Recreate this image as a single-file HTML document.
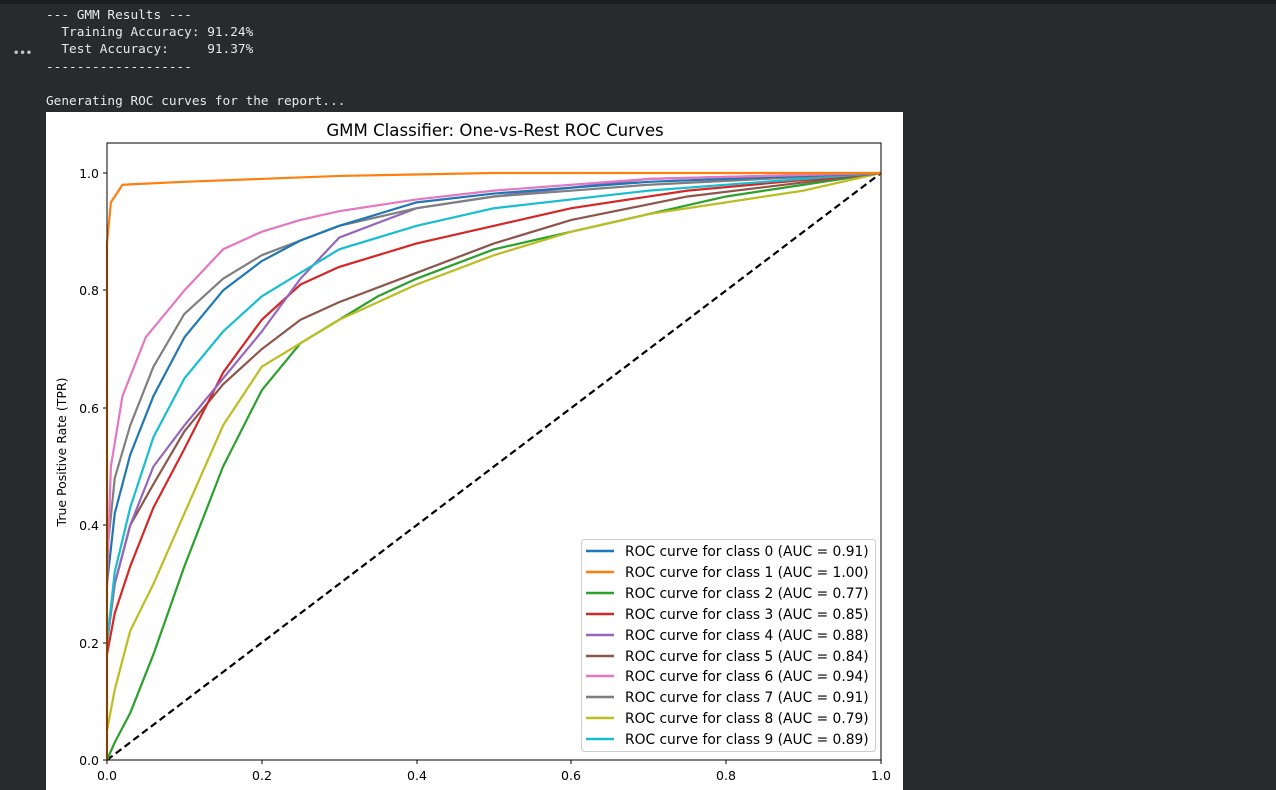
<!DOCTYPE html>
<html><head><meta charset="utf-8"><style>
html,body{margin:0;padding:0}
body{width:1276px;height:790px;background:#282a2c;position:relative;overflow:hidden;font-family:"Liberation Mono",monospace}
.top{position:absolute;left:0;top:0;width:1276px;height:4px;background:#1c1d1f}
.out{position:absolute;left:46px;top:7px;color:#e8eaed;font-size:12.75px;line-height:17.2px;white-space:pre;font-family:"DejaVu Sans Mono","Liberation Mono",monospace}
.dots{position:absolute;left:13px;top:48px;color:#c4c7c5;font-size:10px;font-weight:bold;font-family:"DejaVu Sans",sans-serif}
.plot{position:absolute;left:46px;top:112px;width:857px;height:678px;background:#fff}
svg text{font-family:"DejaVu Sans","Liberation Sans",sans-serif;fill:#000}
</style></head><body>
<div class="top"></div>
<div class="dots">•••</div>
<div class="out">--- GMM Results ---
  Training Accuracy: 91.24%
  Test Accuracy:     91.37%
-------------------

Generating ROC curves for the report...</div>
<div class="plot"></div>
<svg width="1276" height="790" style="position:absolute;left:0;top:0">
<text x="495" y="136" font-size="16.6" text-anchor="middle">GMM Classifier: One-vs-Rest ROC Curves</text>
<text transform="translate(66,452) rotate(-90)" font-size="12.5" text-anchor="middle">True Positive Rate (TPR)</text>
<g font-size="12.5" text-anchor="end">
<text x="99" y="765">0.0</text><text x="99" y="648">0.2</text><text x="99" y="530">0.4</text><text x="99" y="413">0.6</text><text x="99" y="295">0.8</text><text x="99" y="178">1.0</text>
</g>
<g font-size="12.5" text-anchor="middle">
<text x="107" y="780">0.0</text><text x="262" y="780">0.2</text><text x="417" y="780">0.4</text><text x="571" y="780">0.6</text><text x="726" y="780">0.8</text><text x="881" y="780">1.0</text>
</g>
<g stroke="#000" stroke-width="1">
<line x1="103" y1="760" x2="107" y2="760"/><line x1="103" y1="643" x2="107" y2="643"/><line x1="103" y1="525" x2="107" y2="525"/><line x1="103" y1="408" x2="107" y2="408"/><line x1="103" y1="290" x2="107" y2="290"/><line x1="103" y1="173" x2="107" y2="173"/>
<line x1="107" y1="760" x2="107" y2="764"/><line x1="262" y1="760" x2="262" y2="764"/><line x1="417" y1="760" x2="417" y2="764"/><line x1="571" y1="760" x2="571" y2="764"/><line x1="726" y1="760" x2="726" y2="764"/><line x1="881" y1="760" x2="881" y2="764"/>
</g>
<g transform="translate(107,760) scale(774,-587)" fill="none" stroke-width="2.2" stroke-linejoin="round">
<polyline vector-effect="non-scaling-stroke" stroke="#000" stroke-dasharray="7,4" points="0,0 1,1"/>
<polyline vector-effect="non-scaling-stroke" stroke="#2ca02c" points="0,0 0.01,0.03 0.03,0.08 0.06,0.18 0.1,0.33 0.15,0.5 0.2,0.63 0.25,0.71 0.3,0.75 0.35,0.79 0.4,0.82 0.5,0.87 0.6,0.9 0.7,0.93 0.8,0.96 0.9,0.98 1,1"/>
<polyline vector-effect="non-scaling-stroke" stroke="#bcbd22" points="0,0.05 0.01,0.12 0.03,0.22 0.06,0.3 0.1,0.42 0.15,0.57 0.2,0.67 0.3,0.75 0.4,0.81 0.5,0.86 0.6,0.9 0.7,0.93 0.8,0.95 0.9,0.97 1,1"/>
<polyline vector-effect="non-scaling-stroke" stroke="#8c564b" points="0,0.2 0.01,0.3 0.03,0.4 0.06,0.47 0.1,0.56 0.15,0.64 0.2,0.7 0.25,0.75 0.3,0.78 0.4,0.83 0.5,0.88 0.6,0.92 0.75,0.96 1,1"/>
<polyline vector-effect="non-scaling-stroke" stroke="#d62728" points="0,0.18 0.01,0.25 0.03,0.33 0.06,0.43 0.1,0.53 0.15,0.66 0.2,0.75 0.25,0.81 0.3,0.84 0.4,0.88 0.5,0.91 0.6,0.94 0.75,0.97 1,1"/>
<polyline vector-effect="non-scaling-stroke" stroke="#9467bd" points="0,0.2 0.01,0.3 0.03,0.4 0.06,0.5 0.1,0.57 0.15,0.65 0.2,0.73 0.25,0.82 0.3,0.89 0.4,0.94 0.5,0.96 0.7,0.99 1,1"/>
<polyline vector-effect="non-scaling-stroke" stroke="#17becf" points="0,0.2 0.01,0.32 0.03,0.43 0.06,0.55 0.1,0.65 0.15,0.73 0.2,0.79 0.25,0.83 0.3,0.87 0.4,0.91 0.5,0.94 0.7,0.97 1,1"/>
<polyline vector-effect="non-scaling-stroke" stroke="#7f7f7f" points="0,0.35 0.01,0.48 0.03,0.57 0.06,0.67 0.1,0.76 0.15,0.82 0.2,0.86 0.25,0.885 0.3,0.91 0.4,0.94 0.5,0.96 0.7,0.98 1,1"/>
<polyline vector-effect="non-scaling-stroke" stroke="#1f77b4" points="0,0.3 0.01,0.42 0.03,0.52 0.06,0.62 0.1,0.72 0.15,0.8 0.2,0.85 0.25,0.885 0.3,0.91 0.4,0.95 0.5,0.965 0.7,0.985 1,1"/>
<polyline vector-effect="non-scaling-stroke" stroke="#e377c2" points="0,0.3 0.005,0.5 0.02,0.62 0.05,0.72 0.1,0.8 0.15,0.87 0.2,0.9 0.25,0.92 0.3,0.935 0.4,0.955 0.5,0.97 0.7,0.99 1,1"/>
<polyline vector-effect="non-scaling-stroke" stroke="#ff7f0e" points="0,0 0,0.88 0.005,0.95 0.02,0.98 0.1,0.985 0.3,0.995 0.5,1 1,1"/>
</g>
<rect x="107" y="143" width="774" height="617" fill="none" stroke="#000" stroke-width="1"/>
<rect x="581.5" y="539.5" width="294" height="212" rx="3" fill="#fff" fill-opacity="0.85" stroke="#ccc"/>
<g stroke-width="2.5">
<line x1="586" y1="551" x2="614" y2="551" stroke="#1f77b4"/>
<line x1="586" y1="572" x2="614" y2="572" stroke="#ff7f0e"/>
<line x1="586" y1="593" x2="614" y2="593" stroke="#2ca02c"/>
<line x1="586" y1="614" x2="614" y2="614" stroke="#d62728"/>
<line x1="586" y1="635" x2="614" y2="635" stroke="#9467bd"/>
<line x1="586" y1="656" x2="614" y2="656" stroke="#8c564b"/>
<line x1="586" y1="676" x2="614" y2="676" stroke="#e377c2"/>
<line x1="586" y1="697" x2="614" y2="697" stroke="#7f7f7f"/>
<line x1="586" y1="718" x2="614" y2="718" stroke="#bcbd22"/>
<line x1="586" y1="739" x2="614" y2="739" stroke="#17becf"/>
</g>
<g font-size="13.8">
<text x="625" y="556">ROC curve for class 0 (AUC = 0.91)</text>
<text x="625" y="577">ROC curve for class 1 (AUC = 1.00)</text>
<text x="625" y="598">ROC curve for class 2 (AUC = 0.77)</text>
<text x="625" y="619">ROC curve for class 3 (AUC = 0.85)</text>
<text x="625" y="640">ROC curve for class 4 (AUC = 0.88)</text>
<text x="625" y="661">ROC curve for class 5 (AUC = 0.84)</text>
<text x="625" y="681">ROC curve for class 6 (AUC = 0.94)</text>
<text x="625" y="702">ROC curve for class 7 (AUC = 0.91)</text>
<text x="625" y="723">ROC curve for class 8 (AUC = 0.79)</text>
<text x="625" y="744">ROC curve for class 9 (AUC = 0.89)</text>
</g>
</svg>
</body></html>
